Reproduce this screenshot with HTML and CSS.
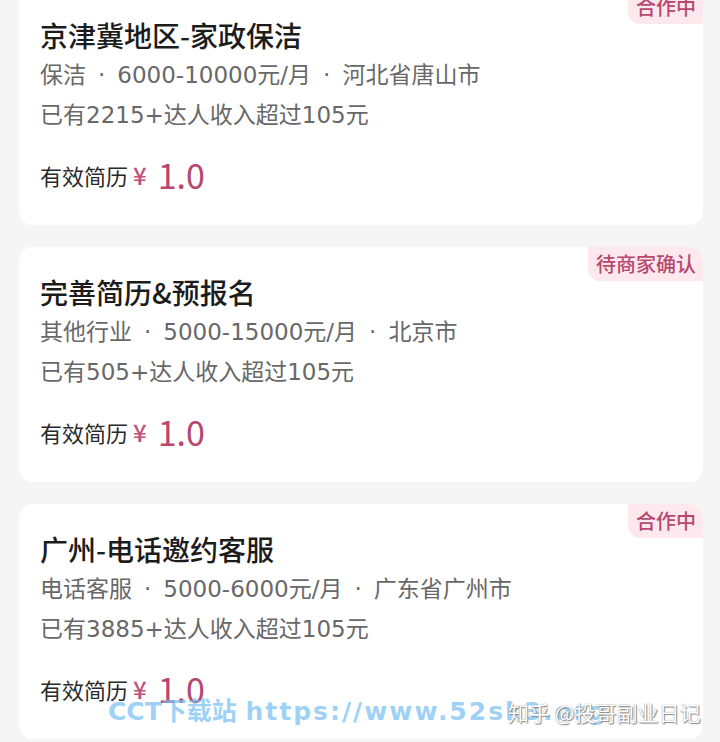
FILE: index.html
```html
<!DOCTYPE html>
<html lang="zh-CN">
<head>
<meta charset="utf-8">
<title>任务列表</title>
<link rel="stylesheet" href="styles.css">
</head>
<body>
<main class="list">
  <section class="card">
    <span class="badge">合作中</span>
    <h2 class="title">京津冀地区-家政保洁</h2>
    <p class="meta">保洁<span class="sep">·</span>6000-10000元/月<span class="sep">·</span>河北省唐山市</p>
    <p class="meta">已有2215+达人收入超过105元</p>
    <p class="price"><span class="label">有效简历</span><span class="yen">¥</span><span class="num">1.0</span></p>
  </section>
  <section class="card">
    <span class="badge">待商家确认</span>
    <h2 class="title">完善简历&amp;预报名</h2>
    <p class="meta">其他行业<span class="sep">·</span>5000-15000元/月<span class="sep">·</span>北京市</p>
    <p class="meta">已有505+达人收入超过105元</p>
    <p class="price"><span class="label">有效简历</span><span class="yen">¥</span><span class="num">1.0</span></p>
  </section>
  <section class="card">
    <span class="badge">合作中</span>
    <h2 class="title">广州-电话邀约客服</h2>
    <p class="meta">电话客服<span class="sep">·</span>5000-6000元/月<span class="sep">·</span>广东省广州市</p>
    <p class="meta">已有3885+达人收入超过105元</p>
    <p class="price"><span class="label">有效简历</span><span class="yen">¥</span><span class="num">1.0</span></p>
  </section>
</main>
<div class="watermark">
  <span class="wm-site">CCT下载站 <span class="wm-url">https://www.52sk3.org</span></span>
  <span class="wm-zhihu">知乎 @投哥副业日记</span>
</div>
</body>
</html>
```
FILE: styles.css
```css
html, body {
  margin: 0;
  padding: 0;
}
body {
  background: #f5f5f5;
  font-family: "Noto Sans CJK SC", "Noto Sans", sans-serif;
  width: 720px;
  height: 742px;
  overflow: hidden;
  position: relative;
}
.list {
  display: flex;
  flex-direction: column;
  gap: 22px;
  margin-top: -10px;
  padding: 0 17px 0 19px;
}
.card {
  position: relative;
  background: #ffffff;
  border-radius: 14px;
  height: 235px;
  box-sizing: border-box;
  padding: 25px 21px 0 21px;
}
.badge {
  position: absolute;
  top: 0;
  right: 0;
  height: 34px;
  line-height: 34px;
  padding: 0 7px 0 8px;
  font-size: 20px;
  font-weight: 500;
  color: #b8486f;
  background: #fde8ee;
  border-radius: 0 14px 0 12px;
}
.title {
  margin: 0;
  font-size: 28px;
  font-weight: 500;
  line-height: 40px;
  color: #1c1c1c;
}
.meta {
  margin: 0;
  font-family: "DejaVu Sans", "Noto Sans CJK SC", sans-serif;
  font-size: 23px;
  line-height: 40px;
  color: #686868;
}
.sep {
  padding: 0 12px;
}
.price {
  margin: 20px 0 0 0;
  height: 40px;
  display: flex;
  align-items: center;
}
.label {
  font-size: 22px;
  line-height: 40px;
  color: #2a2a2a;
}
.yen {
  font-size: 24px;
  line-height: 40px;
  font-weight: 500;
  color: #c0527b;
  margin-left: 5px;
  margin-right: 11px;
}
.num {
  font-size: 34px;
  line-height: 40px;
  color: #b8466f;
}
.watermark {
  position: absolute;
  left: 0;
  top: 694px;
  width: 720px;
  height: 36px;
}
.wm-site {
  position: absolute;
  left: 108px;
  top: 0;
  font-family: "DejaVu Sans", "Noto Sans CJK SC", sans-serif;
  font-weight: bold;
  font-size: 25px;
  line-height: 36px;
  color: rgba(120, 192, 242, 0.72);
  white-space: nowrap;
}
.wm-url {
  letter-spacing: 2px;
}
.wm-zhihu {
  position: absolute;
  left: 508px;
  top: 2px;
  font-size: 21px;
  line-height: 32px;
  color: #ffffff;
  text-shadow: 0 0 1px #777, 1px 1px 1px #888;
  white-space: nowrap;
}
```
